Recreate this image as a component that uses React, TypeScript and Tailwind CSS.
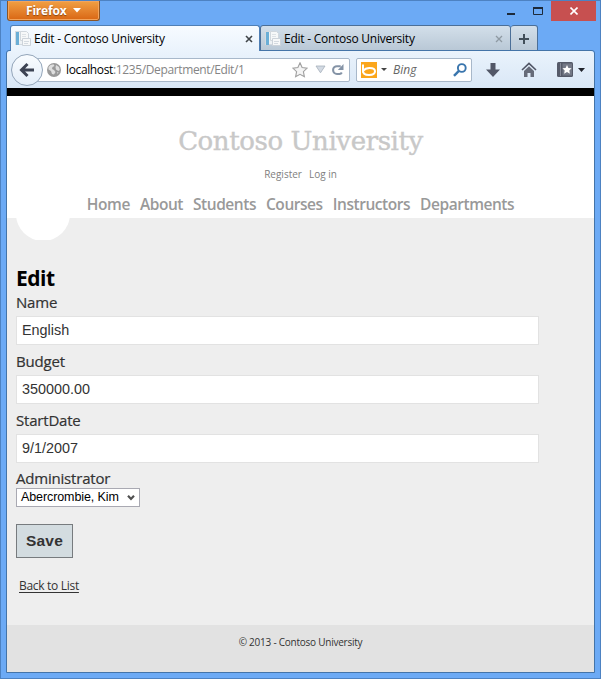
import type { ReactNode } from 'react';

function PageIcon() {
  return (
    <svg width="16" height="16" viewBox="0 0 16 16" className="shrink-0">
      <rect x="0.5" y="0.5" width="8" height="13" fill="#eef2f5" stroke="#d3dae0" />
      <rect x="1" y="1" width="3" height="13" fill="#6aaed6" />
      <path d="M5.500 .5h6l2 2v7h-8z" fill="#f6f8f9" stroke="#d0d7dd" />
      <path d="M7 3.500h4M7 5.500h4" stroke="#dde2e6" />
      <path d="M7.500 7.500h8v7h-8z" fill="#f6f8f9" stroke="#ccd3da" />
      <path d="M9 10.500h5M9 12.500h4" stroke="#d4dae0" />
    </svg>
  );
}

function Close({ faded = false }: { faded?: boolean }) {
  return (
    <svg width="8" height="8" viewBox="0 0 8 8" className="shrink-0">
      <path d="M1 1l6 6M7 1l-6 6" stroke={faded ? '#8f9aa3' : '#404549'} strokeWidth={faded ? 1.3 : 1.6} />
    </svg>
  );
}

function Caption() {
  return (
    <div className="flex h-[24px] items-start">
      <button className="ml-[6px] flex h-[20px] w-[93px] items-center rounded-b-[3px] border border-t-0 border-[#8a5426] bg-linear-to-b from-[#f0a043] to-[#d96611] pl-[18px] text-[12px] font-bold text-white shadow-[inset_0_0_0_1px_#f2a45c]">
        <span className="tracking-[-0.2px] [text-shadow:0_1px_1px_#8a4510]">Firefox</span>
        <svg width="8" height="5" viewBox="0 0 8 5" className="ml-[7px]">
          <path d="M0 0h8L4 4.600z" fill="#fff" />
        </svg>
      </button>
      <div className="ml-auto mr-[4px] flex">
        <svg width="52" height="20" viewBox="0 0 52 20">
          <rect x="8" y="12" width="8" height="2" fill="#1d2a3a" />
          <path d="M34.500 7.500h9v6h-9z" fill="none" stroke="#1d2a3a" strokeWidth="1" />
          <path d="M34 7h10" stroke="#1d2a3a" strokeWidth="2" />
        </svg>
        <div className="flex h-[20px] w-[45px] items-center justify-center bg-[#c75050]">
          <svg width="8" height="8" viewBox="0 0 8 8">
            <path d="M.5 .5l7 7M7.500 .5l-7 7" stroke="#fff" strokeWidth="1.600" />
          </svg>
        </div>
      </div>
    </div>
  );
}

function Tabs() {
  return (
    <div className="ml-[9px] flex h-[26px] font-['Open_Sans','Noto_Sans',sans-serif] text-[12px] text-black">
      <div className="z-10 flex w-[250px] items-center rounded-t-[3px] border border-b-0 border-[#4f7fb5] bg-linear-to-b from-[#f7fbff] to-[#eaf3fc] pl-[4px] pr-[6px]">
        <PageIcon />
        <span className="ml-[3px] whitespace-nowrap tracking-[-0.25px]">Edit - Contoso University</span>
        <span className="ml-auto"><Close /></span>
      </div>
      <div className="flex h-[26px] w-[251px] items-center rounded-t-[3px] border border-[#4b6f98] bg-linear-to-b from-[#d3dfea] to-[#b9c8d6] pl-[4px] pr-[7px] pt-px">
        <PageIcon />
        <span className="ml-[3px] whitespace-nowrap tracking-[-0.25px]">Edit - Contoso University</span>
        <span className="ml-auto"><Close faded /></span>
      </div>
      <div className="flex h-[26px] w-[27px] items-center justify-center rounded-t-[3px] border border-l-0 border-[#4b6f98] bg-linear-to-b from-[#d3dfea] to-[#b9c8d6] pt-px">
        <svg width="10" height="10" viewBox="0 0 10 10">
          <path d="M0 5h10M5 0v10" stroke="#424f5a" strokeWidth="2" />
        </svg>
      </div>
    </div>
  );
}

function Toolbar() {
  return (
    <div className="flex h-[37px] items-center rounded-t-[3px] bg-linear-to-b from-[#eaf3fc] to-[#d9e7f6] font-['Open_Sans','Noto_Sans',sans-serif] text-[12px]">
      <div className="z-10 ml-[4px] flex size-[32px] shrink-0 items-center justify-center rounded-full border border-[#93a5b9] bg-linear-to-b from-[#f9fcff] to-[#e3edf8]">
        <svg width="16" height="16" viewBox="0 0 16 16">
          <path d="M8.500 2L2.500 8l6 6M3 8H15" fill="none" stroke="#3c4353" strokeWidth="3" />
        </svg>
      </div>
      <div className="ml-[-6px] flex h-[24px] w-[313px] shrink-0 items-center rounded-r-[2px] border border-[#a8b8ca] bg-white pl-[9px]">
        <svg width="14" height="14" viewBox="0 0 14 14" className="shrink-0">
          <circle cx="7" cy="7" r="7" fill="#999" />
          <path d="M1.500 4l2-2 3-.7 1 1.700-2 1-.5 2 2 1 1.500 2-1.500 2.500L5 11 4 8 1.500 6.500zM9 2l3 2 .8 3-1.500 1L9 6.500l-.5-2zM10 9.500l1.500-.5-1 2z" fill="#dedede" />
        </svg>
        <span className="ml-[5px] whitespace-nowrap tracking-[-0.37px] text-[#858585]"><span className="text-black">localhost</span>:1235/Department/Edit/1</span>
        <svg width="16" height="16" viewBox="0 0 16 16" className="ml-auto">
          <path d="M8 .8l2.100 4.700 5.100.6-3.800 3.500 1 5.200L8 12.300l-4.400 2.500 1-5.200L.8 6.100l5.100-.6z" fill="#f4f4f4" stroke="#a0a0a0" strokeWidth="1.100" />
        </svg>
        <svg width="11" height="9" viewBox="0 0 11 9" className="ml-[7px]">
          <path d="M1 1h9L5.500 7.800z" fill="#d3dae3" stroke="#a6b0bb" strokeWidth=".8" />
        </svg>
        <svg width="12" height="12" viewBox="0 0 12 12" className="ml-[6px] mr-[5px]">
          <path d="M8.700 2.200H5A3.800 3.800 0 0 0 5 10H7.500A3 3 0 0 0 9.800 8.500" fill="none" stroke="#8493a6" strokeWidth="2.100" />
          <path d="M11.500 0v6H5.800z" fill="#8493a6" />
        </svg>
      </div>
      <div className="ml-[6px] flex h-[24px] w-[116px] shrink-0 items-center rounded-[2px] border border-[#a8b8ca] bg-white pl-[4px]">
        <svg width="16" height="16" viewBox="0 0 16 16" className="shrink-0">
          <rect width="16" height="16" fill="#fba61b" />
          <path d="M2 2.500v8" stroke="#fff" strokeWidth="2" />
          <path d="M2 9C3.500 7.100 5.500 6 8.500 6 12 6 14 7.200 14 9.300S12 13 8 13 2 11.500 2 9z" fill="none" stroke="#fff" strokeWidth="2" />
        </svg>
        <svg width="6" height="3" viewBox="0 0 6 3" className="ml-[4px]"><path d="M0 0h6L3 3z" fill="#444" /></svg>
        <span className="ml-[6px] text-[12px] italic text-[#666]">Bing</span>
        <svg width="14" height="14" viewBox="0 0 14 14" className="ml-auto mr-[4px]">
          <circle cx="8.800" cy="5" r="3.900" fill="#fff" stroke="#3975ad" strokeWidth="1.900" />
          <path d="M5.900 7.900L1 12.800" stroke="#3975ad" strokeWidth="2.400" />
        </svg>
      </div>
      <svg width="14" height="14" viewBox="0 0 14 14" className="ml-[14px] shrink-0">
        <path d="M4.500 0h5v6.500H14L7 14 0 6.500h4.500z" fill="#525767" />
      </svg>
      <svg width="16" height="15" viewBox="0 0 16 15" className="ml-[21px] shrink-0">
        <path d="M1 8l7-6.600L15 8" fill="none" stroke="#505565" strokeWidth="1.600" />
        <path d="M3 9l5-4.700L13 9v6H9.500v-4h-3v4H3z" fill="#666b79" />
      </svg>
      <svg width="16" height="15" viewBox="0 0 16 15" className="ml-[20px] shrink-0">
        <rect width="16" height="15" rx="1.500" fill="#555a69" />
        <rect x="5.500" y="1.500" width="9.500" height="12" fill="#737886" />
        <path d="M3.500 1v13" stroke="#858a98" />
        <path d="M10 3l1.400 2.900 3.200.4-2.300 2.200.6 3.200-2.900-1.600-2.900 1.600.6-3.200-2.300-2.200 3.200-.4z" fill="#fff" />
      </svg>
      <svg width="7" height="4" viewBox="0 0 7 4" className="ml-[5px] shrink-0"><path d="M0 0h7L3.500 4z" fill="#20242c" /></svg>
    </div>
  );
}

function SiteHeader() {
  return (
    <header className="flex h-[122px] shrink-0 flex-col items-center bg-white">
      <h1 className="mt-[26px] h-[38px] whitespace-nowrap font-['DejaVu_Serif',serif] text-[26px] leading-[38px] tracking-[-0.4px] text-[#c8c8c8] [-webkit-text-stroke:0.4px_#c8c8c8]">Contoso University</h1>
      <div className="mt-[7px] flex h-[14px] gap-[7px] text-[10px] leading-[14px] text-[#808080]">
        <a>Register</a>
        <a>Log in</a>
      </div>
      <nav className="mt-[11px] flex h-[24px] gap-[10px] text-[15.500px] font-semibold leading-[24px] tracking-[-0.45px] text-[#999]">
        <a>Home</a><a>About</a><a>Students</a><a>Courses</a><a>Instructors</a><a>Departments</a>
      </nav>
    </header>
  );
}

function Field({ label, children }: { label: string; children: ReactNode }) {
  return (
    <div className="h-[59px]">
      <div className="h-[24px] text-[15px] leading-[20px] tracking-[-0.2px] [-webkit-text-stroke:0.2px_#333]">{label}</div>
      <div className="flex h-[29px] w-[523px] items-center border border-[#e2e2e2] bg-white pl-[5px] font-['Liberation_Sans',Arial,sans-serif] text-[14.4px]">{children}</div>
    </div>
  );
}

export default function App() {
  return (
    <div className="flex h-[679px] w-[601px] flex-col overflow-hidden border border-[#4d82c2] bg-[#6caaf5] font-['Open_Sans','Noto_Sans',sans-serif]">
      <Caption />
      <Tabs />
      <div className="mx-[5px] mt-[-1px] flex h-[623px] flex-col rounded-t-[3px] border border-[#4474a8]">
        <Toolbar />
        <div className="h-[8px] shrink-0 bg-black" />
        <SiteHeader />
        <main className="h-[407px] shrink-0 bg-[#eeeeee] pl-[9px] text-[#333]">
          <div className="h-[22px] w-[54px] overflow-hidden">
            <div className="mt-[-31px] h-[54px] w-[54px] rounded-full bg-white" />
          </div>
          <h2 className="mt-[25px] h-[27px] text-[21px] font-bold leading-[27px] tracking-[-0.5px] text-black">Edit</h2>
          <Field label="Name">English</Field>
          <Field label="Budget">350000.00</Field>
          <Field label="StartDate">9/1/2007</Field>
          <div className="mt-[-1px] h-[20px] text-[15px] leading-[20px] tracking-[-0.2px] [-webkit-text-stroke:0.2px_#333]">Administrator</div>
          <div className="flex h-[19px] w-[124px] items-center border border-[#a9a9b2] bg-white pl-[4px] pr-[4px] font-['Liberation_Sans',Arial,sans-serif] text-[12.500px] text-black">
            <span className="whitespace-nowrap tracking-[-0.1px]">Abercrombie, Kim</span>
            <svg width="8" height="6" viewBox="0 0 8 6" className="ml-auto"><path d="M1 .8l3 3.200L7 .8" fill="none" stroke="#505050" strokeWidth="2.200" /></svg>
          </div>
          <button className="mt-[17px] flex h-[34px] w-[57px] items-center justify-center border border-[#777b7e] bg-[#d3dce0] font-['Liberation_Sans',Arial,sans-serif] text-[15.500px] font-bold tracking-[0.2px] text-[#333]">Save</button>
          <a className="ml-[3px] mt-[20px] block h-[16px] w-max text-[12px] leading-[16px] tracking-[-0.3px] underline underline-offset-2">Back to List</a>
        </main>
        <footer className="flex h-[47px] shrink-0 justify-center bg-[#e2e2e2] pt-[10px] text-[10px] leading-[14px] tracking-[-0.24px] text-[#333]">© 2013 - Contoso University</footer>
      </div>
    </div>
  );
}
